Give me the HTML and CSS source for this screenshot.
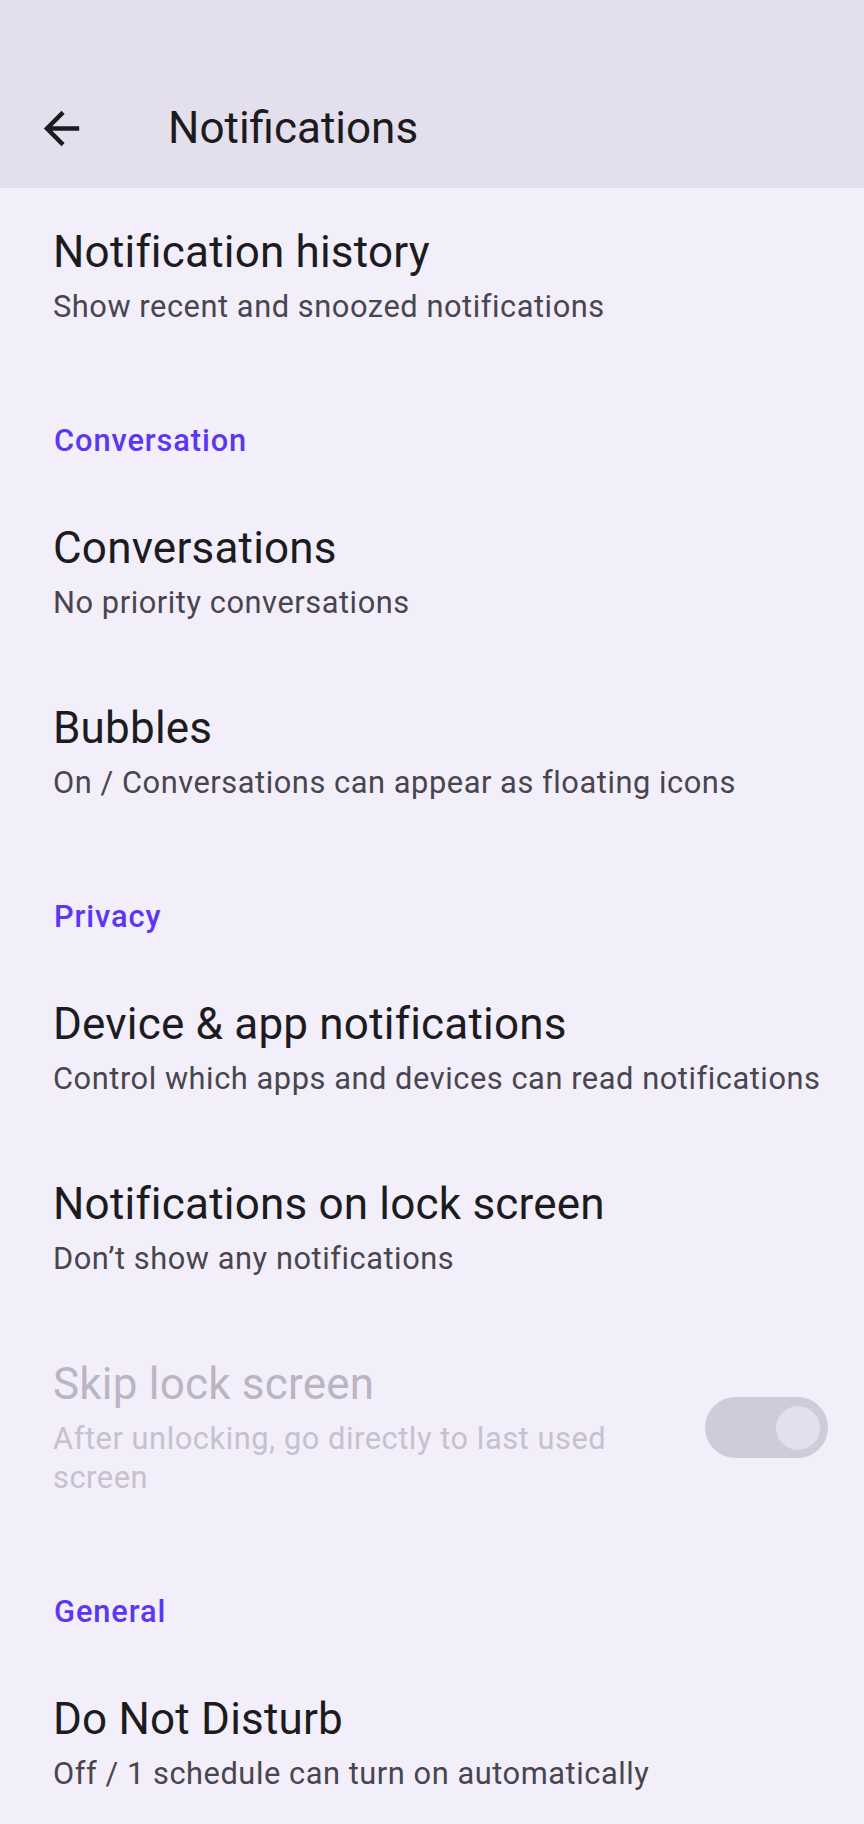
FILE: index.html
```html
<!DOCTYPE html>
<html lang="en">
<head>
  <meta charset="UTF-8">
  <meta name="viewport" content="width=device-width, initial-scale=1.0">
  <title>Notifications</title>
  <link rel="stylesheet" href="styles.css">
</head>
<body>
  <div class="app-bar">
    <div class="toolbar">
      <svg class="back-icon" viewBox="0 0 24 24" width="53" height="53">
        <path d="M20 11H7.83l5.59-5.59L12 4l-8 8 8 8 1.41-1.41L7.83 13H20v-2z" fill="#1c1b20"/>
      </svg>
      <h1 class="page-title">Notifications</h1>
    </div>
  </div>

  <div class="settings-list">
    <div class="pref">
      <div class="pref-text">
        <div class="pref-title">Notification history</div>
        <div class="pref-summary">Show recent and snoozed notifications</div>
      </div>
    </div>

    <div class="category">Conversation</div>

    <div class="pref">
      <div class="pref-text">
        <div class="pref-title">Conversations</div>
        <div class="pref-summary">No priority conversations</div>
      </div>
    </div>

    <div class="pref">
      <div class="pref-text">
        <div class="pref-title">Bubbles</div>
        <div class="pref-summary">On / Conversations can appear as floating icons</div>
      </div>
    </div>

    <div class="category">Privacy</div>

    <div class="pref">
      <div class="pref-text">
        <div class="pref-title">Device &amp; app notifications</div>
        <div class="pref-summary">Control which apps and devices can read notifications</div>
      </div>
    </div>

    <div class="pref">
      <div class="pref-text">
        <div class="pref-title">Notifications on lock screen</div>
        <div class="pref-summary">Don’t show any notifications</div>
      </div>
    </div>

    <div class="pref disabled">
      <div class="pref-text">
        <div class="pref-title">Skip lock screen</div>
        <div class="pref-summary">After unlocking, go directly to last used screen</div>
      </div>
      <div class="switch on">
        <div class="switch-thumb"></div>
      </div>
    </div>

    <div class="category">General</div>

    <div class="pref">
      <div class="pref-text">
        <div class="pref-title">Do Not Disturb</div>
        <div class="pref-summary">Off / 1 schedule can turn on automatically</div>
      </div>
    </div>
  </div>
</body>
</html>
```

FILE: styles.css
```css
body {
  margin: 0;
  background-color: #f2eefa;
  font-family: Roboto, "Noto Sans", sans-serif;
  color: #1c1b20;
}

/* Top app bar */
.app-bar {
  height: 188px;
  background-color: #e3dfec;
  box-sizing: border-box;
  padding-top: 72px;
}

.toolbar {
  height: 112px;
  display: flex;
  align-items: center;
  padding-left: 35px;
  gap: 80px;
}

.back-icon {
  display: block;
  flex: none;
}

.page-title {
  margin: 0;
  font-size: 44px;
  font-weight: 400;
  line-height: 52px;
}

/* Preference rows */
.pref {
  display: flex;
  align-items: center;
  padding: 38px 36px 42px 53px;
}

.pref-text {
  flex: 1;
  min-width: 0;
}

.pref-title {
  font-size: 44px;
  line-height: 52px;
  letter-spacing: 0.2px;
  color: #1c1b20;
}

.pref-summary {
  margin-top: 9px;
  font-size: 30.8px;
  line-height: 39px;
  letter-spacing: 0.55px;
  color: #49454f;
}

.pref.disabled .pref-title {
  color: #bab5c3;
}

.pref.disabled .pref-summary {
  color: #c6c1cf;
  padding-right: 30px;
}

/* Section headers */
.category {
  padding: 53px 51px 24px 54px;
  font-size: 30.8px;
  line-height: 39px;
  font-weight: 500;
  letter-spacing: 0.9px;
  color: #5b37f2;
}

/* Switch */
.switch {
  flex: none;
  width: 123px;
  height: 61px;
  margin-left: 36px;
  border-radius: 31px;
  background-color: #cfcbd9;
  display: flex;
  align-items: center;
  justify-content: flex-end;
  padding-right: 8px;
  box-sizing: border-box;
}

.switch-thumb {
  width: 44px;
  height: 44px;
  border-radius: 50%;
  background-color: #e3dfec;
}
```
